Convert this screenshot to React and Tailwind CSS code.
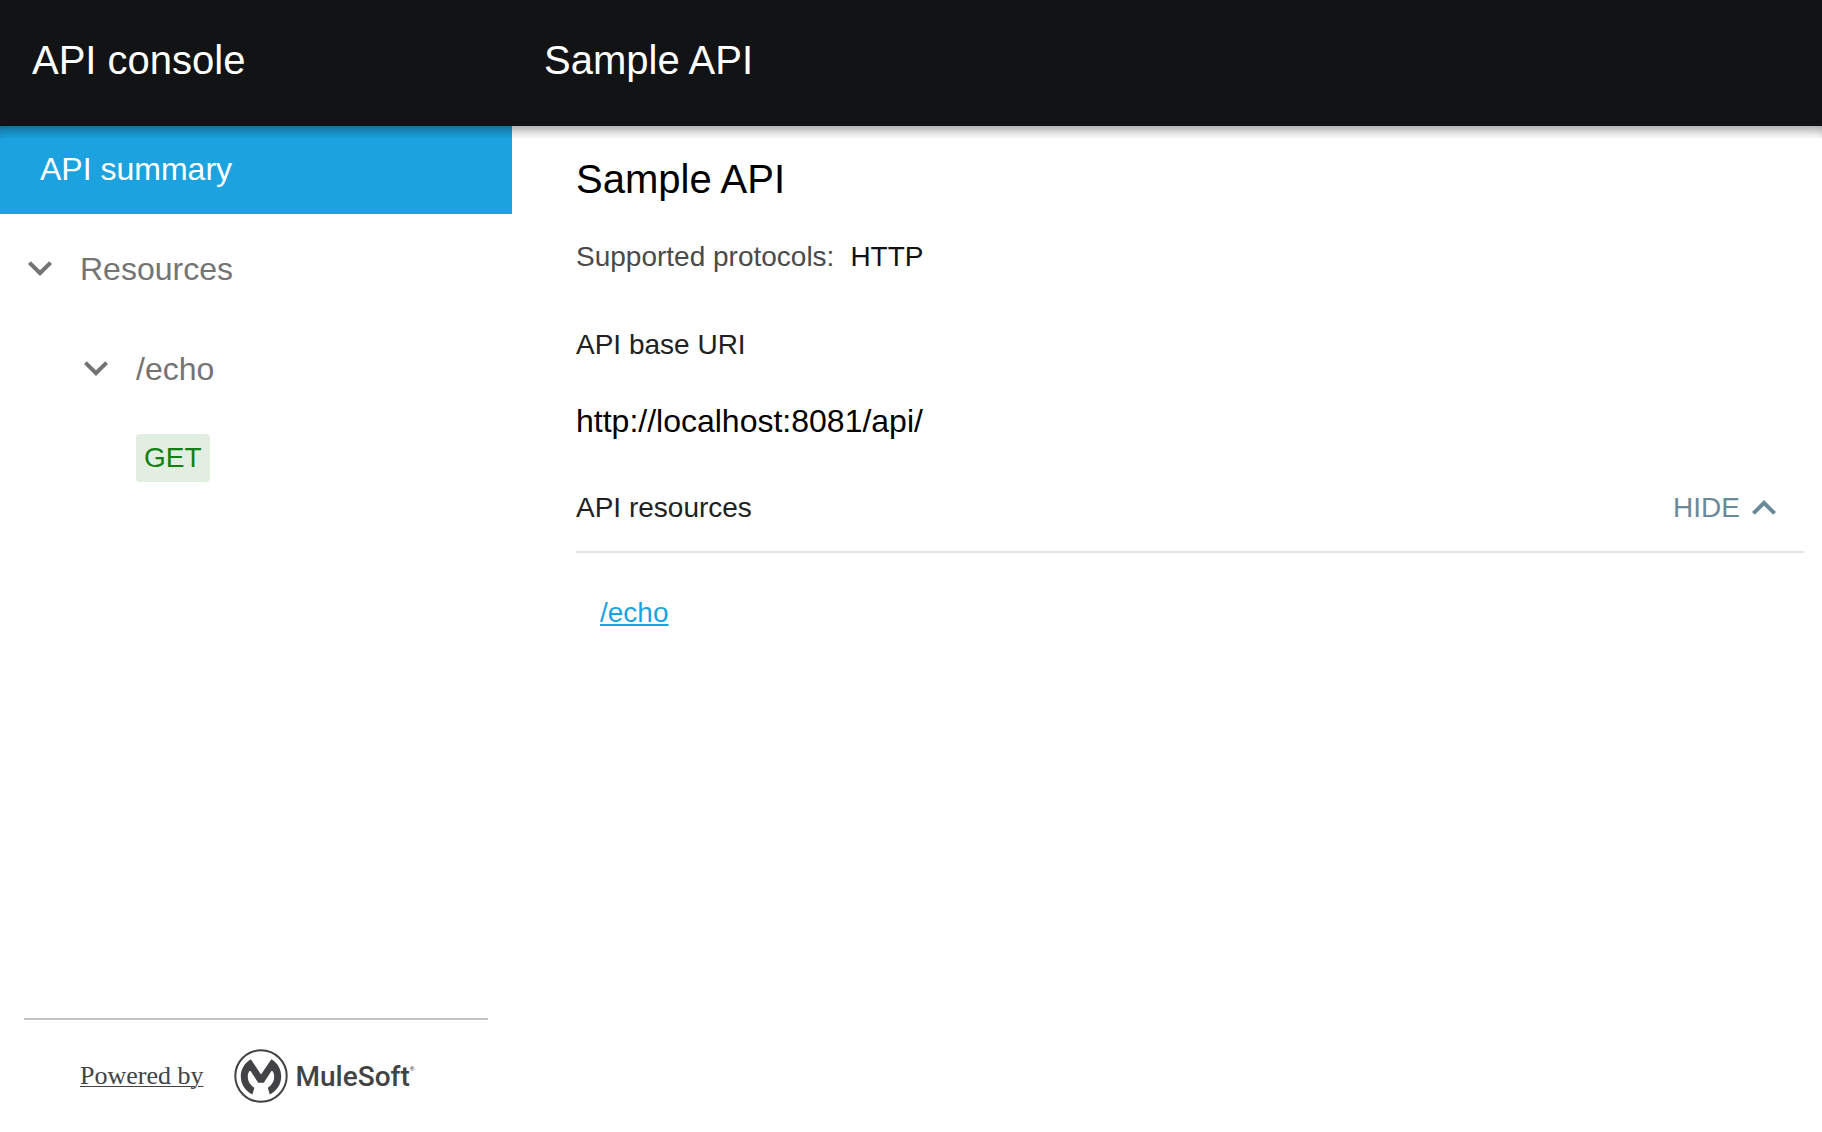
import { useState } from "react";

function Chevron({ up = false }) {
  return (
    <svg viewBox="0 0 24 24" className="size-12 shrink-0" fill="currentColor" aria-hidden="true">
      <path
        d={
          up
            ? "M7.41 15.41L12 10.83l4.59 4.58L18 14l-6-6-6 6z"
            : "M7.41 8.09L12 12.67l4.59-4.58L18 9.5l-6 6-6-6z"
        }
      />
    </svg>
  );
}

function MuleMark() {
  return (
    <svg viewBox="0 0 54 54" className="size-[54px] shrink-0" aria-hidden="true">
      <circle cx="27" cy="27" r="25.7" fill="none" stroke="#434345" strokeWidth="2" />
      <path
        fill="#434345"
        d="M16.8 10.2 L27 25.4 L37.4 10.2 C43.5 13.8 47.2 20.1 47.2 27.4 C47.2 35.2 42.8 41.8 35.8 45.4 L33.8 38.8 C37.8 36.4 40.2 32.4 40.2 27.6 C40.2 25.6 39.8 24 38.8 22.4 C38.2 21.6 37.6 21.6 37.1 22.4 L29.8 33.8 L24.2 33.8 L16.9 22.4 C16.4 21.6 15.8 21.6 15.2 22.4 C14.2 24 13.8 25.6 13.8 27.6 C13.8 32.4 16.2 36.4 20.4 38.8 L18.4 45.4 C11.2 41.8 6.8 35.2 6.8 27.4 C6.8 20.1 10.7 13.8 16.8 10.2 Z"
      />
    </svg>
  );
}

function Sidebar() {
  return (
    <aside className="flex w-[512px] shrink-0 flex-col">
      <nav className="flex flex-col text-[32px] leading-10 text-[#747474]">
        <a href="#summary" className="flex h-[88px] items-center bg-[#1ca3df] pl-10 pb-0.5 text-white">
          API summary
        </a>
        <button type="button" className="mt-[7px] flex h-24 items-center gap-4 pl-4 text-left">
          <Chevron />
          Resources
        </button>
        <button type="button" className="mt-1 flex h-24 items-center gap-4 pl-[72px] text-left">
          <Chevron />
          /echo
        </button>
        <a
          href="#get"
          className="mt-[17px] ml-[136px] flex h-12 items-center self-start rounded-sm bg-[#e3eee3] px-2 text-[28px] text-[#128012]"
        >
          GET
        </a>
      </nav>
      <footer className="mx-6 mt-auto flex h-[114px] items-center gap-[31px] border-t-2 border-[#c2c2c2] pl-14 text-[#434345]">
        <a
          href="#powered"
          className="font-['Liberation_Serif',serif] text-[26px] leading-8 underline decoration-1 underline-offset-2"
        >
          Powered by
        </a>
        <a href="#mulesoft" className="flex items-center gap-[7px]">
          <MuleMark />
          <span className="flex pt-0.5 font-[Roboto,sans-serif] text-[28px] leading-8 font-medium">
            MuleSoft<span className="text-[6px] leading-4">®</span>
          </span>
        </a>
      </footer>
    </aside>
  );
}

function Summary() {
  const [open, setOpen] = useState(true);
  return (
    <main className="flex min-w-0 grow flex-col pt-[29px] pr-[18px] pl-16 text-[28px] leading-8">
      <h1 className="text-[40px] leading-12 text-black">Sample API</h1>
      <p className="mt-[38px] flex gap-4 text-[#4a4a4a]">
        Supported protocols: <span className="text-[#111]">HTTP</span>
      </p>
      <h2 className="mt-14 text-[#212121]">API base URI</h2>
      <p className="mt-10 text-[32px] leading-10 text-black">http://localhost:8081/api/</p>
      <section className="mt-6">
        <div className="flex h-[88px] items-center justify-between border-b-2 border-[#e3e3e3] pr-4">
          <h2 className="text-[#212121]">API resources</h2>
          <button
            type="button"
            onClick={() => setOpen(!open)}
            aria-expanded={open}
            className="flex items-center text-[#6b8a99]"
          >
            {open ? "HIDE" : "SHOW"}
            <Chevron up={open} />
          </button>
        </div>
        {open && (
          <a
            href="#echo"
            className="mt-11 ml-6 inline-block text-[#1ca3df] underline decoration-2 underline-offset-2"
          >
            /echo
          </a>
        )}
      </section>
    </main>
  );
}

export default function App() {
  return (
    <div className="flex min-h-screen flex-col bg-white font-['Liberation_Sans',Arial,sans-serif]">
      <header className="relative flex h-[126px] items-center bg-[#121315] pb-1.5 text-[40px] leading-12 text-white">
        <div className="w-[512px] shrink-0 pl-8">API console</div>
        <div className="pl-8">Sample API</div>
        <div className="pointer-events-none absolute inset-x-0 top-full h-3 shadow-[inset_0_10px_12px_-6px_rgba(0,0,0,0.4)]" />
      </header>
      <div className="flex grow">
        <Sidebar />
        <Summary />
      </div>
    </div>
  );
}
